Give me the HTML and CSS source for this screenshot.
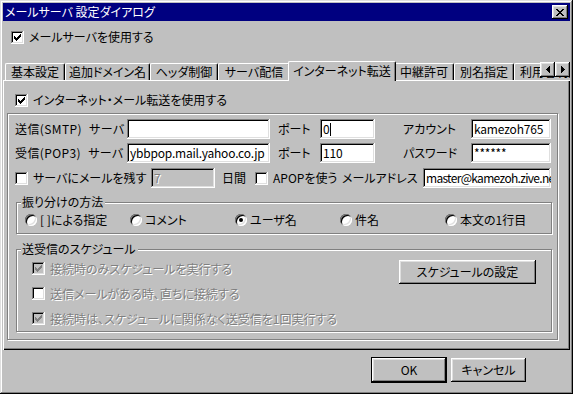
FILE: index.html
```html
<!DOCTYPE html>
<html lang="ja">
<head>
    <meta charset="UTF-8">
    <title>メールサーバ 設定ダイアログ</title>
    <link rel="stylesheet" href="styles.css">
</head>
<body>
    <div class="window">
        <div class="titlebar">
            <span class="title">メールサーバ 設定ダイアログ</span>
            <span class="close-btn">
                <svg width="8" height="7" viewBox="0 0 8 7" shape-rendering="crispEdges"><path d="M0 0h2v1H0zM6 0h2v1H6zM1 1h2v1H1zM5 1h2v1H5zM2 2h4v1H2zM3 3h2v1H3zM2 4h4v1H2zM1 5h2v1H1zM5 5h2v1H5zM0 6h2v1H0zM6 6h2v1H6z"/></svg>
            </span>
        </div>

        <div class="check-row top-check">
            <span class="box"><svg class="tick" width="7" height="7" viewBox="0 0 7 7" shape-rendering="crispEdges"><path d="M0 2h1v3H0zM1 3h1v3H1zM2 4h1v3H2zM3 3h1v3H3zM4 2h1v3H4zM5 1h1v3H5zM6 0h1v3H6z"/></svg></span>
            <span>メールサーバを使用する</span>
        </div>

        <div class="tabs">
            <div class="tab">基本設定</div>
            <div class="tab">追加ドメイン名</div>
            <div class="tab">ヘッダ制御</div>
            <div class="tab">サーバ配信</div>
            <div class="tab active">インターネット転送</div>
            <div class="tab">中継許可</div>
            <div class="tab">別名指定</div>
            <div class="tab">利用者制限</div>
            <div class="tab-arrows">
                <span class="arrow-btn"><svg width="4" height="7" viewBox="0 0 4 7" shape-rendering="crispEdges"><path d="M3 0h1v7H3zM2 1h1v5H2zM1 2h1v3H1zM0 3h1v1H0z"/></svg></span>
                <span class="arrow-btn"><svg width="4" height="7" viewBox="0 0 4 7" shape-rendering="crispEdges"><path d="M0 0h1v7H0zM1 1h1v5H1zM2 2h1v3H2zM3 3h1v1H3z"/></svg></span>
            </div>
        </div>

        <div class="panel">
            <div class="check-row inner-check">
                <span class="box"><svg class="tick" width="7" height="7" viewBox="0 0 7 7" shape-rendering="crispEdges"><path d="M0 2h1v3H0zM1 3h1v3H1zM2 4h1v3H2zM3 3h1v3H3zM4 2h1v3H4zM5 1h1v3H5zM6 0h1v3H6z"/></svg></span>
                <span>インターネット・メール転送を使用する</span>
            </div>

            <div class="frame">
                <div class="server-grid">
                    <span class="server-label">送信(SMTP) サーバ</span>
                    <div class="field"></div>
                    <span class="label-port">ポート</span>
                    <div class="field">0<span class="caret"></span></div>
                    <span class="label-account">アカウント</span>
                    <div class="field">kamezoh765</div>

                    <span class="server-label">受信(POP3) サーバ</span>
                    <div class="field">ybbpop.mail.yahoo.co.jp</div>
                    <span class="label-port">ポート</span>
                    <div class="field">110</div>
                    <span class="label-account">パスワード</span>
                    <div class="field">******</div>
                </div>

                <div class="keep-row">
                    <span class="box"></span>
                    <span class="keep-label">サーバにメールを残す</span>
                    <div class="field off days">7</div>
                    <span class="unit">日間</span>
                    <span class="box"></span>
                    <span class="apop-label">APOPを使う</span>
                    <span class="mail-label">メールアドレス</span>
                    <div class="field mail">master@kamezoh.zive.ne</div>
                </div>

                <div class="group sort-group">
                    <span class="group-title">振り分けの方法</span>
                    <div class="radio-grid">
                        <div class="radio-item"><span class="radio"></span>[ ]による指定</div>
                        <div class="radio-item"><span class="radio"></span>コメント</div>
                        <div class="radio-item"><span class="radio on"></span>ユーザ名</div>
                        <div class="radio-item"><span class="radio"></span>件名</div>
                        <div class="radio-item"><span class="radio"></span>本文の1行目</div>
                    </div>
                </div>

                <div class="group sched-group">
                    <span class="group-title">送受信のスケジュール</span>
                    <div class="sched-list">
                        <div class="check-row sched-row">
                            <span class="box muted"><svg class="tick" width="7" height="7" viewBox="0 0 7 7" shape-rendering="crispEdges"><path d="M0 2h1v3H0zM1 3h1v3H1zM2 4h1v3H2zM3 3h1v3H3zM4 2h1v3H4zM5 1h1v3H5zM6 0h1v3H6z"/></svg></span>
                            <span class="muted-text">接続時のみスケジュールを実行する</span>
                        </div>
                        <div class="check-row sched-row">
                            <span class="box"></span>
                            <span class="muted-text">送信メールがある時、直ちに接続する</span>
                        </div>
                        <div class="check-row sched-row">
                            <span class="box muted"><svg class="tick" width="7" height="7" viewBox="0 0 7 7" shape-rendering="crispEdges"><path d="M0 2h1v3H0zM1 3h1v3H1zM2 4h1v3H2zM3 3h1v3H3zM4 2h1v3H4zM5 1h1v3H5zM6 0h1v3H6z"/></svg></span>
                            <span class="muted-text">接続時は、スケジュールに関係なく送受信を1回実行する</span>
                        </div>
                    </div>
                    <div class="btn btn-schedule">スケジュールの設定</div>
                </div>
            </div>
        </div>

        <div class="footer">
            <div class="btn btn-ok">OK</div>
            <div class="btn btn-cancel">キャンセル</div>
        </div>
    </div>
</body>
</html>
```

FILE: styles.css
```css
* {
    box-sizing: border-box;
}
body {
    margin: 0;
    background: #c0c0c0;
    font-family: "Noto Sans CJK JP", sans-serif;
    font-size: 12px;
    line-height: 14px;
    color: #000;
    font-feature-settings: "palt";
}
.window {
    width: 573px;
    height: 394px;
    padding: 3px;
    display: flex;
    flex-direction: column;
    background: #c0c0c0;
    box-shadow: inset -1px -1px #000, inset 1px 1px #dfdfdf, inset -2px -2px #808080, inset 2px 2px #fff;
}

/* raised and sunken bevels */
.close-btn, .arrow-btn, .btn {
    background: #c0c0c0;
    box-shadow: inset -1px -1px #000, inset 1px 1px #fff, inset -2px -2px #808080, inset 2px 2px #dfdfdf;
}
.box, .field {
    background: #fff;
    box-shadow: inset -1px -1px #fff, inset 1px 1px #808080, inset -2px -2px #dfdfdf, inset 2px 2px #000;
}

/* title bar */
.titlebar {
    flex: none;
    height: 18px;
    padding: 0 2px;
    display: flex;
    align-items: center;
    justify-content: space-between;
    background: #000080;
    color: #fff;
}
.close-btn {
    width: 16px;
    height: 14px;
    display: flex;
    align-items: center;
    justify-content: center;
}

/* checkboxes */
.check-row {
    display: flex;
    align-items: center;
    height: 16px;
    white-space: nowrap;
}
.box {
    flex: none;
    width: 13px;
    height: 13px;
    padding: 3px;
    margin-right: 5px;
}
.tick {
    display: block;
}
.box.muted {
    background: #c0c0c0;
}
.box.muted .tick {
    fill: #808080;
}
.muted-text {
    color: #808080;
    text-shadow: 1px 1px #fff;
}
.top-check {
    margin: 8px 0 0 8px;
}

/* tab strip */
.tabs {
    flex: none;
    position: relative;
    z-index: 1;
    height: 20px;
    margin-top: 16px;
    padding-left: 2px;
    display: flex;
    align-items: flex-end;
    overflow: hidden;
}
.tab {
    flex: none;
    height: 17px;
    margin-bottom: 1px;
    display: flex;
    align-items: center;
    justify-content: center;
    white-space: nowrap;
    overflow: hidden;
    background: #c0c0c0;
    border: 1px solid #fff;
    border-bottom: none;
    border-right-color: #000;
    border-radius: 2px 2px 0 0;
    box-shadow: inset -1px 0 #808080;
}
.tab:nth-child(1) { width: 60px; }
.tab:nth-child(2) { width: 85px; }
.tab:nth-child(3) { width: 68px; }
.tab:nth-child(4) { width: 72px; }
.tab:nth-child(6) { width: 60px; }
.tab:nth-child(7) { width: 60px; }
.tab:nth-child(8) { width: 70px; justify-content: flex-start; padding-left: 5px; }
.tab.active {
    position: relative;
    z-index: 1;
    width: 108px;
    height: 20px;
    margin: 0 -2px;
    padding-bottom: 2px;
}
.tab-arrows {
    position: absolute;
    top: 1px;
    right: 0;
    display: flex;
    z-index: 2;
}
.arrow-btn {
    width: 15px;
    height: 15px;
    display: flex;
    align-items: center;
    justify-content: center;
}

/* tab page */
.panel {
    flex: none;
    height: 270px;
    margin-top: -1px;
    padding: 12px 0 0 4px;
    box-shadow: inset 1px 1px #fff, inset -1px -1px #000, inset -2px -2px #808080;
}
.inner-check {
    margin-left: 8px;
}
.frame {
    width: 551px;
    height: 227px;
    margin-top: 5px;
    padding: 5px 0 0 7px;
    border: 1px solid #808080;
    box-shadow: inset 1px 1px #fff, 1px 1px #fff;
}
.server-grid {
    display: grid;
    grid-template-columns: 112px 143px 50px 55px 96px 80px;
    grid-auto-rows: 20px;
    row-gap: 4px;
    align-items: center;
    white-space: nowrap;
}
.server-label {
    letter-spacing: 0.4px;
    word-spacing: 4px;
}
.label-port {
    padding-left: 8px;
}
.label-account {
    padding-left: 28px;
}
.field {
    height: 20px;
    padding: 0 2px 0 3px;
    display: flex;
    align-items: center;
    white-space: nowrap;
    overflow: hidden;
    letter-spacing: -0.2px;
}
.field.off {
    background: #c0c0c0;
    color: #808080;
    text-shadow: 1px 1px #fff;
}
.caret {
    width: 1px;
    height: 13px;
    margin-left: 1px;
    background: #000;
}

.keep-row {
    display: flex;
    align-items: center;
    height: 20px;
    margin-top: 5px;
    white-space: nowrap;
}
.keep-label { width: 118px; }
.days { width: 64px; }
.unit { width: 40px; padding-left: 7px; }
.apop-label { width: 69px; }
.mail-label { width: 81px; }
.mail { width: 128px; letter-spacing: -0.7px; }

/* group boxes */
.group {
    position: relative;
    width: 536px;
    margin-left: 1px;
    border: 1px solid #808080;
    box-shadow: inset 1px 1px #fff, 1px 1px #fff;
}
.group-title {
    position: absolute;
    top: -8px;
    left: 4px;
    padding: 0 2px 0 1px;
    background: #c0c0c0;
    white-space: nowrap;
}
.sort-group {
    height: 32px;
    margin-top: 14px;
    padding: 10px 0 0 8px;
}
.radio-grid {
    display: grid;
    grid-template-columns: repeat(5, 105px);
}
.radio-item {
    display: flex;
    align-items: center;
    height: 14px;
    white-space: nowrap;
}
.radio {
    flex: none;
    width: 12px;
    height: 12px;
    margin-right: 3px;
    border-radius: 50%;
    display: flex;
    align-items: center;
    justify-content: center;
    background: #fff;
    box-shadow: inset 1px 1px #808080, inset -1px -1px #fff, inset 2px 2px #000, inset -2px -2px #dfdfdf;
}
.radio.on::after {
    content: "";
    width: 4px;
    height: 4px;
    border-radius: 50%;
    background: #000;
}
.sched-group {
    height: 83px;
    margin-top: 15px;
    padding: 6px 15px 0 15px;
    display: flex;
    align-items: flex-start;
}
.sched-list {
    flex: 1;
}
.sched-row {
    height: 25px;
}
.btn {
    height: 24px;
    display: flex;
    align-items: center;
    justify-content: center;
    white-space: nowrap;
}
.btn-schedule {
    width: 137px;
    margin-top: 4px;
}

/* dialog buttons */
.footer {
    flex: 1;
    display: flex;
    justify-content: flex-end;
    align-items: flex-start;
    gap: 5px;
    padding: 8px 44px 0 0;
}
.btn-ok {
    width: 74px;
    outline: 1px solid #000;
}
.btn-cancel {
    width: 75px;
}
```
